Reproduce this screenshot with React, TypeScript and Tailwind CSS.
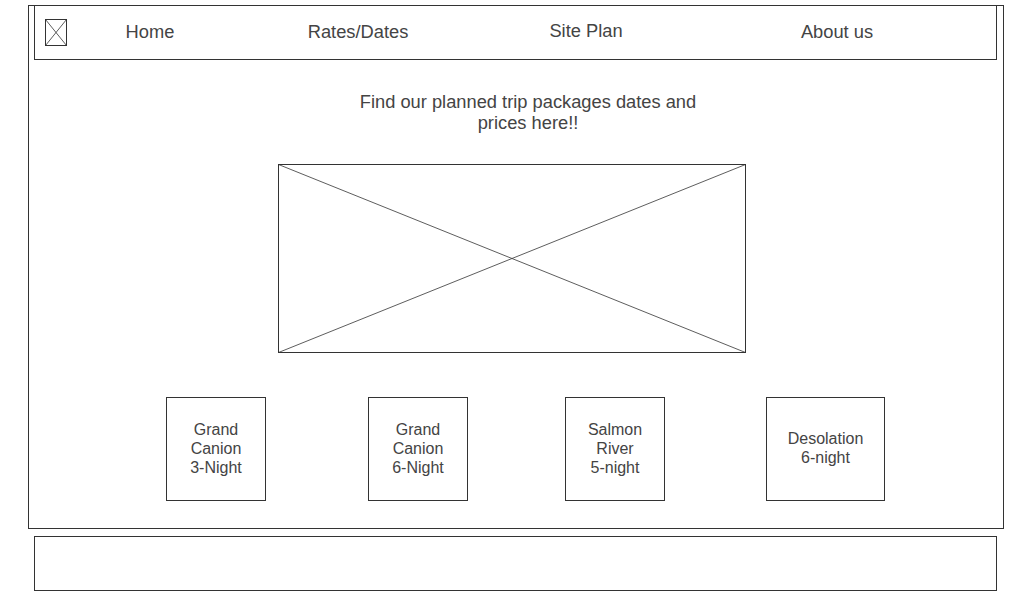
const font = { fontFamily: '"Liberation Sans", Arial, sans-serif' };

function CrossBox({ w, h }: { w: number; h: number }) {
  return (
    <svg width={w} height={h} viewBox={`0 0 ${w} ${h}`} className="block">
      <rect x="0.5" y="0.5" width={w - 1} height={h - 1} fill="white" stroke="#333" strokeWidth="1" />
      <line x1="0.5" y1="0.5" x2={w - 0.5} y2={h - 0.5} stroke="#333" strokeWidth="0.8" />
      <line x1={w - 0.5} y1="0.5" x2="0.5" y2={h - 0.5} stroke="#333" strokeWidth="0.8" />
    </svg>
  );
}

const trips = [
  { lines: ["Grand", "Canion", "3-Night"], ml: "ml-[137px]", w: "w-[100px]" },
  { lines: ["Grand", "Canion", "6-Night"], ml: "ml-[102px]", w: "w-[100px]" },
  { lines: ["Salmon", "River", "5-night"], ml: "ml-[97px]", w: "w-[100px]" },
  { lines: ["Desolation", "6-night"], ml: "ml-[101px]", w: "w-[119px]" },
];

export default function App() {
  return (
    <div className="w-[1024px] h-[600px] bg-white text-[#444] text-base pt-[5px]" style={font}>
      {/* Page frame */}
      <div className="ml-[28px] w-[976px] h-[524px] border border-[#333]">
        {/* Nav */}
        <div className="-mt-px ml-[5px] w-[963px] h-[55px] border border-[#333] flex items-center text-[18.3px]">
          <div className="ml-[10px]">
            <CrossBox w={22} h={27} />
          </div>
          <span className="ml-[33px] w-[100px] text-center leading-5 -mt-[2px]">Home</span>
          <span className="ml-[58px] w-[200px] text-center leading-5 -mt-[2px]">Rates/Dates</span>
          <span className="ml-[78px] w-[100px] text-center leading-5 -mt-[3px]">Site Plan</span>
          <span className="ml-[151px] w-[100px] text-center leading-5 -mt-[2px]">About us</span>
        </div>

        <p className="mt-[31px] ml-[319px] w-[360px] text-center text-[18.3px] leading-[21px]">
          Find our planned trip packages dates and prices here!!
        </p>

        <div className="mt-[31px] ml-[249px]">
          <CrossBox w={468} h={189} />
        </div>

        <div className="mt-[44px] flex">
          {trips.map((t, i) => (
            <div
              key={i}
              className={`${t.ml} ${t.w} h-[104px] border border-[#333] flex flex-col items-center justify-center text-center leading-[19px] pb-[2px]`}
            >
              {t.lines.map((l) => (
                <span key={l}>{l}</span>
              ))}
            </div>
          ))}
        </div>
      </div>

      {/* Footer */}
      <div className="mt-[7px] ml-[34px] w-[963px] h-[55px] border border-[#333]" />
    </div>
  );
}
